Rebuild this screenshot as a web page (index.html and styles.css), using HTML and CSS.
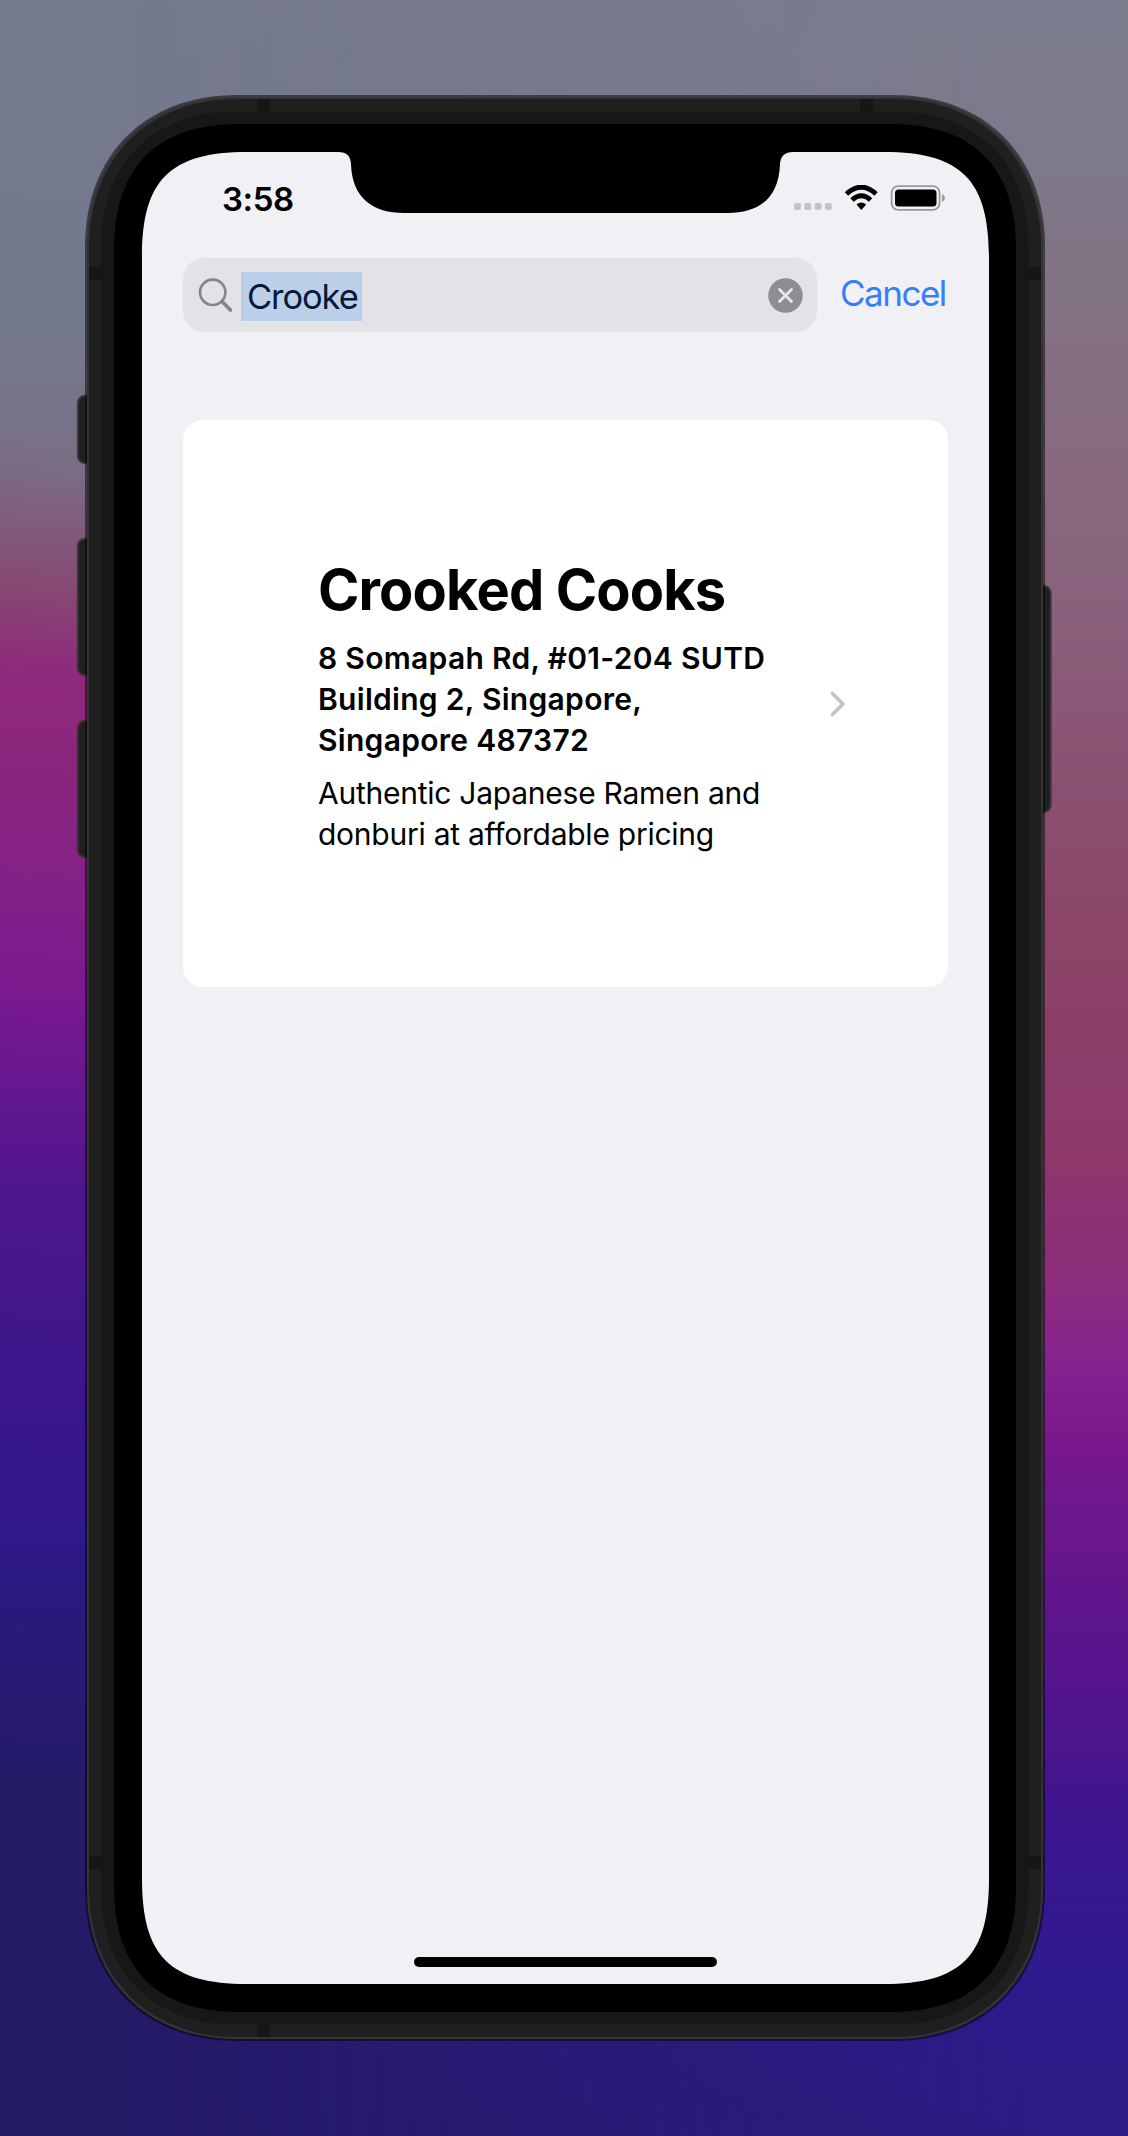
FILE: index.html
```
<!DOCTYPE html>
<html lang="en">
<head>
<meta charset="utf-8">
<title>Crooked Cooks</title>
<link rel="stylesheet" href="styles.css">
</head>
<body>
<main class="stage">
  <div class="device">
    <svg class="chassis" viewBox="0 0 1128 2136" aria-hidden="true">
      <!-- side buttons -->
      <g class="buttons">
        <rect x="78" y="396" width="22" height="67" rx="7"/>
        <rect x="78" y="539" width="22" height="136" rx="7"/>
        <rect x="78" y="721" width="22" height="136" rx="7"/>
        <rect x="1030" y="586" width="20.500" height="226" rx="7"/>
      </g>
      <!-- rim, band, inner band, bezel, display -->
      <path class="rim" d="M85 247C85 155 145 95 237 95H893C985 95 1045 155 1045 247V1889C1045 1981 985 2041 893 2041H237C145 2041 85 1981 85 1889Z"/>
      <path class="edge" d="M87 247C87 156.500 146.500 97 237 97H893C983.500 97 1043 156.500 1043 247V1889C1043 1979.500 983.500 2039 893 2039H237C146.500 2039 87 1979.500 87 1889Z"/>
      <path class="band" d="M89 247C89 158.500 148.500 99 237 99H893C981.500 99 1041 158.500 1041 247V1889C1041 1977.500 981.500 2037 893 2037H237C148.500 2037 89 1977.500 89 1889Z"/>
      <g class="seam">
        <path d="M257 99h13v13h-13zM860 99h13v13h-13zM89 267h13v13h-13zM1028 267h13v13h-13zM89 1856h13v13h-13zM1028 1856h13v13h-13zM257 2024h13v13h-13z"/>
      </g>
      <path class="inner" d="M101.500 246.500C101.500 162.500 152.500 111.500 236.500 111.500H893.500C977.500 111.500 1028.500 162.500 1028.500 246.500V1889.500C1028.500 1973.500 977.500 2024.500 893.500 2024.500H236.500C152.500 2024.500 101.500 1973.500 101.500 1889.500Z"/>
      <path class="bezel" d="M114 249C114 167 157 124 239 124H891C973 124 1016 167 1016 249V1887C1016 1969 973 2012 891 2012H239C157 2012 114 1969 114 1887Z"/>
      <path class="display" d="M142 257C142 180 170 152 247 152H338C347 152 350.500 156 351 164C352 198 373 213 404 213H728C759 213 779 198 780 164C780.500 156 785 152 793 152H884C961 152 989 180 989 257V1879C989 1956 961 1984 884 1984H247C170 1984 142 1956 142 1879Z"/>
    </svg>
    <div class="screen">
      <header class="status">
        <time class="clock">3:58</time>
        <svg class="indicators" viewBox="0 0 152 28" aria-hidden="true">
          <g fill="#c4c3c8"><rect x="0" y="18" width="7" height="7" rx="2"/><rect x="10.300" y="18" width="7" height="7" rx="2"/><rect x="20.600" y="18" width="7" height="7" rx="2"/><rect x="30.800" y="18" width="7" height="7" rx="2"/></g>
          <g fill="none" stroke="#000" stroke-width="5"><path d="M52.500 9Q67.300-4.500 82 9"/><path d="M58 15Q67.300 6.500 76.600 15"/></g>
          <path d="M62.500 19.500Q67.300 15.500 72.200 19.500L67.300 25Z"/>
          <rect x="97.600" y="1.200" width="48" height="23.600" rx="6.500" fill="none" stroke="#98979c" stroke-width="1.800"/>
          <rect x="101" y="4.600" width="41.500" height="17" rx="3.500"/>
          <path d="M148 9Q151 10.500 151 13Q151 15.500 148 17Z" fill="#98979c"/>
        </svg>
      </header>
      <div class="searchbar">
        <div class="field">
          <svg class="glass" viewBox="0 0 36 36" aria-hidden="true"><circle cx="14.700" cy="14.300" r="12.700"/><path d="M24 23.500L32.500 32"/></svg>
          <span class="query">Crooke</span>
          <svg class="clear" viewBox="0 0 35 35" aria-hidden="true"><circle cx="17.500" cy="17.500" r="17.300"/><path d="M11.500 11.500L23.500 23.500M23.500 11.500L11.500 23.500"/></svg>
        </div>
        <a class="cancel">Cancel</a>
      </div>
      <article class="card">
        <div class="info">
          <h1>Crooked Cooks</h1>
          <p class="address">8 Somapah Rd, #01-204 SUTD<br>Building 2, Singapore,<br>Singapore 487372</p>
          <p class="about">Authentic Japanese Ramen and<br>donburi at affordable pricing</p>
        </div>
        <svg class="chevron" viewBox="0 0 16 26" aria-hidden="true"><path d="M2.500 2.500L13 13L2.500 23.500"/></svg>
      </article>
      <div class="home"></div>
    </div>
  </div>
</main>
</body>
</html>
```

FILE: styles.css
```
* { box-sizing: border-box; }

body { margin: 0; }

.stage {
  position: relative;
  width: 1128px;
  height: 2136px;
  padding: 152px 139px 152px 142px;
  overflow: hidden;
  font-family: Inter, "Liberation Sans", sans-serif;
  color: #000;
  background: linear-gradient(184deg, #757a8d 0, #74798d 400px, #796f85 535px, #874b73 655px, #8e2a7b 745px, #8a257f 860px, #832088 970px, #78198f 1075px, #60178f 1180px, #4d168c 1275px, #3e168b 1445px, #30188b 1595px, #281a78 1715px, #241b67 1855px, #241b67 2250px);
}

.stage::before {
  content: "";
  position: absolute;
  inset: 0;
  background: linear-gradient(#7a7c8c 0, #7d798b 160px, #817484 272px, #866c80 409px, #89637d 586px, #8a5272 763px, #8c4468 954px, #8d386b 1158px, #8c2c7c 1280px, #88248e 1349px, #78188c 1444px, #65168c 1567px, #52148c 1703px, #3c168e 1825px, #2f1a8e 1975px, #2c1b82 2136px);
  -webkit-mask-image: linear-gradient(90deg, transparent 12%, #000 92%);
  mask-image: linear-gradient(90deg, transparent 12%, #000 92%);
}

.device { height: 1832px; }

.chassis {
  position: absolute;
  inset: 0;
  width: 1128px;
  height: 2136px;
}

.buttons rect { fill: #1f1f1f; stroke: #303230; stroke-opacity: .75; stroke-width: 2.500; }
.rim { fill: #000; fill-opacity: .5; }
.edge { fill: #343434; }
.band { fill: #1f1f1f; }
.seam { fill: #161616; }
.inner { fill: #171717; }
.bezel { fill: #000; }
.display { fill: #f1f0f5; }

.screen {
  position: relative;
  display: flex;
  flex-direction: column;
  height: 100%;
  padding: 0 41px;
}

.status {
  display: flex;
  align-items: center;
  justify-content: space-between;
  height: 106px;
  padding: 0 2px 13px 39px;
}

.clock { font-size: 33px; font-weight: 600; line-height: 40px; letter-spacing: -.4px; }
.indicators { width: 152px; height: 28px; }

.searchbar {
  display: flex;
  align-items: center;
  justify-content: space-between;
  height: 74px;
}

.field {
  display: flex;
  align-items: center;
  width: 634px;
  height: 74px;
  padding: 0 14px 0 15px;
  border-radius: 21px;
  background: #e3e2e7;
}

.glass { width: 36px; height: 36px; margin-top: 2px; fill: none; stroke: #858489; stroke-width: 2.600; stroke-linecap: round; }
.glass path { stroke-width: 3.600; }

.query {
  width: 121px;
  height: 49px;
  margin-top: 2px;
  margin-left: 7px;
  padding-left: 6px;
  background: #bccfe8;
  color: #061a38;
  font-size: 34.5px;
  line-height: 49px;
  letter-spacing: -1.1px;
  white-space: nowrap;
}

.clear { width: 35px; height: 35px; margin-left: auto; fill: #8e8d92; stroke-linecap: round; }
.clear path { stroke: #e9e8ed; stroke-width: 2.800; }
.cancel { width: 108px; margin-bottom: 4px; color: #3480fa; font-size: 35px; line-height: 48px; letter-spacing: -1.5px; white-space: nowrap; }

.card {
  display: flex;
  align-items: center;
  justify-content: space-between;
  height: 567px;
  margin-top: 88px;
  padding: 0 102px 0 135px;
  border-radius: 20px;
  background: #fff;
}

.info { width: 460px; padding-top: 4px; white-space: nowrap; }
h1, p { margin: 0; }
h1 { font-size: 56px; font-weight: 700; line-height: 68px; letter-spacing: -.87px; }
.address { margin-top: 14px; font-size: 30px; font-weight: 600; line-height: 41px; letter-spacing: .3px; }
.about { margin-top: 12px; font-size: 30px; line-height: 41px; letter-spacing: -.25px; }
.chevron { width: 16px; height: 26px; fill: none; stroke: #c4c4c7; stroke-width: 3.800; stroke-linecap: round; stroke-linejoin: round; }

.home {
  width: 303px;
  height: 10px;
  margin: auto auto 17px 231px;
  border-radius: 5px;
  background: #000;
}
```
